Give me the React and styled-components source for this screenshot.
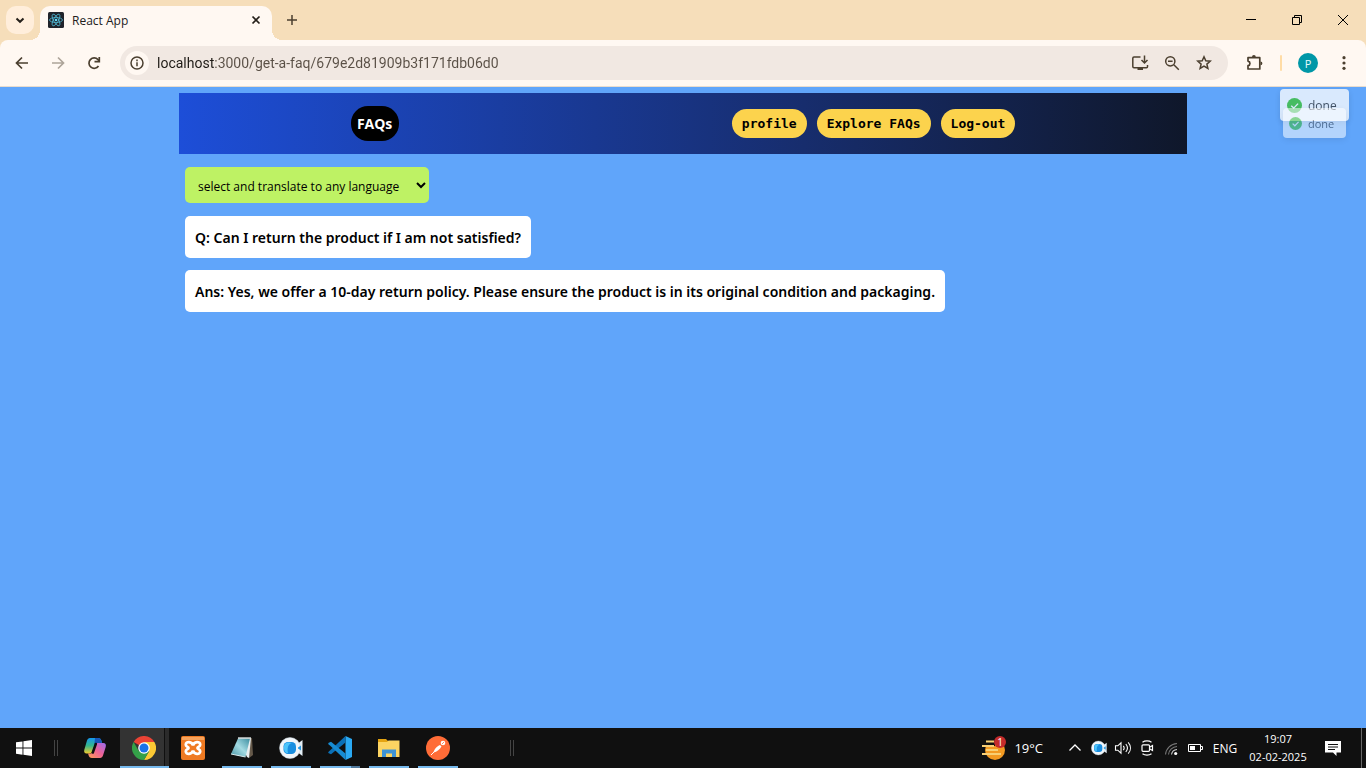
import React from "react";
import styled, { createGlobalStyle, css } from "styled-components";

const GlobalStyle = createGlobalStyle`
  *, *::before, *::after { box-sizing: border-box; }
  body { margin: 0; font-family: "Open Sans", "Noto Sans", sans-serif; }
  button { font: inherit; color: inherit; border: 0; padding: 0; background: none; }
  svg { display: block; flex: none; }
`;

const ui = `"Open Sans", "Noto Sans", sans-serif`;

const Screen = styled.div`
  display: flex;
  flex-direction: column;
  min-height: 100vh;
`;

/* ---------- browser chrome ---------- */

const TabStrip = styled.div`
  display: flex;
  height: 40px;
  background: #f6deba;
`;

const TabSearch = styled.button`
  display: grid;
  place-items: center;
  width: 28px;
  height: 28px;
  margin: 6px;
  border-radius: 10px;
  background: #ffeedb;
`;

const Tab = styled.div`
  position: relative;
  display: flex;
  align-items: center;
  gap: 8px;
  width: 232px;
  height: 34px;
  margin-top: 6px;
  padding: 0 8px 6px;
  border-radius: 10px 10px 0 0;
  background: #fff8f2;
  font: 12px ${ui};
  color: #22201c;

  &::before,
  &::after {
    content: "";
    position: absolute;
    bottom: 0;
    width: 10px;
    height: 10px;
  }
  &::before {
    right: 100%;
    background: radial-gradient(circle at 0 0, transparent 10px, #fff8f2 10px);
  }
  &::after {
    left: 100%;
    background: radial-gradient(circle at 100% 0, transparent 10px, #fff8f2 10px);
  }
`;

const TabTitle = styled.span`
  flex: 1;
`;

const TabButton = styled.button`
  display: grid;
  place-items: center;
  width: ${(p) => p.$size}px;
  height: ${(p) => p.$size}px;
`;

const NewTab = styled(TabButton)`
  margin: 6px;
`;

const WindowButtons = styled.div`
  display: flex;
  margin-left: auto;
`;

const WindowButton = styled.button`
  display: grid;
  place-items: center;
  width: 46px;
  height: 40px;
`;

const ToolbarBack = styled.div`
  background: #f6deba;
`;

const Toolbar = styled.div`
  display: flex;
  align-items: center;
  height: 47px;
  padding: 0 4px;
  border-bottom: 1px solid #e9dccd;
  border-radius: 8px 8px 0 0;
  background: #fff8f2;
`;

const ToolButton = styled.button`
  display: grid;
  place-items: center;
  width: 36px;
  height: 34px;
  opacity: ${(p) => (p.disabled ? 0.45 : 1)};
`;

const AddressBar = styled.div`
  display: flex;
  flex: 1;
  align-items: center;
  height: 34px;
  margin: 0 8px;
  padding: 0 8px 0 5px;
  border-radius: 17px;
  background: #f1e8e2;
`;

const SiteInfo = styled.button`
  display: grid;
  place-items: center;
  width: 24px;
  height: 24px;
  border-radius: 50%;
  background: #fff8f2;
`;

const Address = styled.input`
  flex: 1;
  min-width: 0;
  height: 24px;
  margin-left: 8px;
  padding: 0;
  border: 0;
  outline: 0;
  font: 14px Roboto, "Open Sans", sans-serif;
  color: transparent;
  background: linear-gradient(90deg, #1f1b16 57px, #5a5046 57px);
  background-clip: text;
`;

const AddressButton = styled(ToolButton)`
  width: 32px;
`;

const Separator = styled.span`
  width: 2px;
  height: 16px;
  margin: 0 8px;
  border-radius: 1px;
  background: #ffdca6;
`;

const Avatar = styled.span`
  display: grid;
  place-items: center;
  width: 20px;
  height: 20px;
  border-radius: 50%;
  background: #0097a7;
  color: #e9fbfd;
  font: 11px ${ui};
`;

/* ---------- page ---------- */

const Page = styled.div`
  position: relative;
  flex: 1;
  padding: 6px;
  background: #60a5fa;
`;

const Container = styled.div`
  max-width: 1008px;
  margin: 0 auto;
`;

const Nav = styled.nav`
  display: flex;
  align-items: center;
  justify-content: space-around;
  height: 61px;
  padding: 0 5px;
  background: linear-gradient(to right, #1d4ed8, #172d6d 62%, #0f172a);
`;

const Brand = styled.a`
  display: grid;
  place-items: center;
  width: 48px;
  height: 35px;
  border-radius: 17px;
  background: #000;
  color: #fff;
  font: 700 14px ${ui};
  text-decoration: none;
`;

const Links = styled.div`
  display: flex;
  gap: 10px;
`;

const pill = css`
  height: 29px;
  padding: 0 10px;
  border-radius: 15px;
  background: #fcd34d;
  color: #000;
  font: bold 13px/29px "DejaVu Sans Mono", "Liberation Mono", monospace;
  text-decoration: none;
  white-space: nowrap;
`;

const NavLink = styled.a`
  ${pill}
`;

const NavButton = styled.button`
  ${pill}
`;

const Faq = styled.main`
  display: flex;
  flex-direction: column;
  align-items: flex-start;
  gap: 12px;
  padding: 13px 6px;
`;

const Language = styled.select`
  width: 244px;
  height: 36px;
  margin-bottom: 1px;
  padding: 2px 9px 0;
  border: 0;
  border-radius: 5px;
  background: #bef264;
  color: #000;
  font: 12px ${ui};
`;

const Card = styled.p`
  margin: 0;
  padding: 12px 10px 10px;
  border-radius: 5px;
  background: #fff;
  color: #000;
  font: 600 14px/20px "Noto Sans", "Open Sans", sans-serif;
`;

const Toast = styled.div`
  position: absolute;
  display: flex;
  align-items: center;
  gap: 6px;
  top: ${(p) => (p.$back ? 21 : 2)}px;
  right: ${(p) => (p.$back ? 20 : 17)}px;
  width: ${(p) => (p.$back ? 63 : 69)}px;
  height: ${(p) => (p.$back ? 30 : 32)}px;
  padding-left: ${(p) => (p.$back ? 6 : 7)}px;
  border-radius: 4px;
  background: #fff;
  box-shadow: 0 2px 6px rgba(0, 0, 0, 0.15);
  opacity: ${(p) => (p.$back ? 0.52 : 0.76)};
  color: #363636;
  font: ${(p) => (p.$back ? 11 : 12)}px ${ui};
`;

/* ---------- taskbar ---------- */

const Taskbar = styled.footer`
  display: flex;
  align-items: center;
  height: 40px;
  background: #101010;
  color: #fff;
  font: 12px ${ui};
`;

const StartButton = styled.button`
  display: grid;
  place-items: center;
  width: 48px;
  height: 40px;
`;

const Grip = styled.span`
  width: 4px;
  height: 16px;
  margin: 0 ${(p) => p.$after}px 0 ${(p) => p.$before}px;
  border: solid #444;
  border-width: 0 1px;
`;

const Apps = styled.div`
  display: flex;
`;

const AppButton = styled.button`
  position: relative;
  display: grid;
  place-items: center;
  width: 49px;
  height: 40px;
  padding-right: 1px;
  background: ${(p) => (p.$active ? "linear-gradient(90deg, #333 44px, #101010 44px, #101010 45px, #2b2b2b 45px)" : "none")};

  &::after {
    content: "";
    position: absolute;
    bottom: 0;
    left: ${(p) => (p.$active ? 0 : 4)}px;
    right: ${(p) => (p.$active ? 0 : 5)}px;
    height: 2px;
    background: ${(p) =>
      p.$stacked ? "linear-gradient(90deg, #76b9ed 31px, #50789b 31px)" : p.$open || p.$active ? "#76b9ed" : "none"};
  }
`;

const Tray = styled.div`
  display: flex;
  align-items: center;
  height: 40px;
  margin-left: auto;
`;

const Weather = styled.button`
  display: flex;
  align-items: center;
  gap: 8px;
  margin-right: 20px;
  font-size: 13px;
`;

const TrayButton = styled.button`
  display: grid;
  place-items: center;
  width: 24px;
  height: 40px;
`;

const InputLanguage = styled.button`
  width: 36px;
  height: 40px;
`;

const Clock = styled.button`
  width: 70px;
  height: 40px;
  font-size: 11px;
  line-height: 18px;
`;

const Notifications = styled(TrayButton)`
  width: 40px;
  margin-right: 8px;
`;

const ShowDesktop = styled.button`
  width: 5px;
  height: 40px;
  border-left: 1px solid #666;
`;

/* ---------- icons ---------- */

const Icon = ({ size = 16, box = 16, children, color = "#4b3f2f", w = 1.7, ...rest }) => (
  <svg width={size} height={size} viewBox={`0 0 ${box} ${box}`} fill="none" stroke={color} strokeWidth={w} aria-hidden="true" {...rest}>
    {children}
  </svg>
);

const ReactLogo = () => (
  <Icon w={0.8} color="#4fb8d3">
    <rect width="16" height="16" rx="1.5" fill="#20232a" stroke="none" />
    <ellipse cx="8" cy="8" rx="6.5" ry="2.5" />
    <ellipse cx="8" cy="8" rx="6.5" ry="2.5" transform="rotate(60 8 8)" />
    <ellipse cx="8" cy="8" rx="6.5" ry="2.5" transform="rotate(120 8 8)" />
    <circle cx="8" cy="8" r="1.3" fill="#61dafb" stroke="none" />
  </Icon>
);

const Check = ({ size }) => (
  <Icon size={size} color="#fff" w={1.5}>
    <circle cx="8" cy="8" r="8" fill="#3fc433" stroke="none" />
    <path d="M4.5 8.2 7.2 10.8 11.8 6" />
  </Icon>
);

const VideoApp = ({ size }) => (
  <Icon size={size} box={24}>
    <path d="M17 9 23.500 4v16L17 15z" fill="#e4eff7" stroke="none" />
    <circle cx="11" cy="12" r="10.5" fill="#f1f6fa" stroke="#c9d5dd" strokeWidth=".5" />
    <rect x="4.500" y="6" width="12.500" height="12" rx="4.500" fill="#198ee0" stroke="none" />
    <path d="M5 11c0-5 5-5 8-4-4 1-5 5-4 10-3 0-4-2-4-6z" fill="#4cc4fa" stroke="none" />
    <path d="M19 11.5 22 9.5v5l-3-2z" fill="#2998df" stroke="none" />
  </Icon>
);

const Copilot = () => (
  <Icon size={24} box={24}>
    <defs>
      <linearGradient id="cpA" x1="0" y1="0" x2="0" y2="1">
        <stop stopColor="#1597ee" />
        <stop offset=".5" stopColor="#36b78b" />
        <stop offset="1" stopColor="#f3cb2c" />
      </linearGradient>
      <linearGradient id="cpB" x1="1" y1="0" x2="0" y2="1">
        <stop stopColor="#9a6cf2" />
        <stop offset=".5" stopColor="#ee6295" />
        <stop offset="1" stopColor="#ffa052" />
      </linearGradient>
    </defs>
    <path d="M7 2h8c2 0 3 1 3.500 3l.5 2h-5c-1 0-2 .7-2.400 2L9.500 15c-.5 1.600-1.300 2.500-3 2.500H3.800C1.500 17.500.7 16 1.300 13.700L4 4.500C4.500 3 5.500 2 7 2z" fill="url(#cpA)" stroke="none" />
    <path d="M12 2h3c2 0 3 1 3.500 3l.5 2h-5c-1.500 0-2.200.7-2.700 2z" fill="#1656b9" stroke="none" />
    <path d="M17 22H9c-2 0-3-1-3.500-3L5 17.500h2.500c1.500 0 2.500-1 3-2.500L12.500 9c.5-1.500 1.500-2 3-2h4.700c2.200 0 3.200 1.600 2.500 4L20 19.500c-.5 1.600-1.500 2.500-3 2.500z" fill="url(#cpB)" stroke="none" />
    <path d="M12.800 8 9.800 16.500" stroke="#101010" strokeWidth="2.500" strokeLinecap="round" />
  </Icon>
);

const Chrome = () => (
  <Icon size={24} box={24}>
    <path d="M12 12 1.600 6A12 12 0 0 1 22.400 6H12z" fill="#ea4335" stroke="none" />
    <path d="M12 6h10.400A12 12 0 0 1 12 24l5.200-9z" fill="#fcc934" stroke="none" />
    <path d="M1.600 6A12 12 0 0 0 12 24l5.200-9L12 12 6.800 15z" fill="#34a048" stroke="none" />
    <circle cx="12" cy="12" r="5.800" fill="#fff" stroke="none" />
    <circle cx="12" cy="12" r="4.500" fill="#1a73e8" stroke="none" />
  </Icon>
);

const Xampp = () => (
  <Icon size={24} box={24} color="#fff" w={2.800}>
    <rect width="24" height="24" rx="2" fill="#ef7a22" stroke="none" />
    <path d="M1 1h22v3H1z" fill="#f7a35c" stroke="none" />
    <path d="M12 9.500C11 5.500 4.800 5 4.800 8.700 4.800 10.600 7.500 11 7.500 12S4.800 13.400 4.800 15.300C4.800 19 11 18.500 12 14.500 13 18.500 19.200 19 19.200 15.300 19.200 13.400 16.500 13 16.500 12S19.200 10.600 19.200 8.700C19.200 5 13 5.500 12 9.500z" />
  </Icon>
);

const Notepad = () => (
  <Icon size={24} box={24}>
    <defs>
      <linearGradient id="np" x1="1" y1="0" x2="0" y2="1">
        <stop stopColor="#3b8da0" />
        <stop offset=".5" stopColor="#a3dae2" />
        <stop offset="1" stopColor="#4794a5" />
      </linearGradient>
    </defs>
    <path d="M8 2h14l1 17-4 3z" fill="#65594a" stroke="none" />
    <path d="M8 2h13l-2 20-2-1z" fill="#e9eef0" stroke="none" />
    <path d="M8 2.500h12L15.500 21 1 18z" fill="url(#np)" stroke="none" />
    <path d="M8 2h13" stroke="#ccd4d5" strokeWidth="1.500" />
    <path d="M1 18l14.500 3" stroke="#d9ecef" strokeWidth="1" />
  </Icon>
);

const VsCode = () => (
  <Icon size={24} box={24}>
    <path d="M17.500 0 24 3v18l-6.500 3z" fill="#2aa9f3" stroke="none" />
    <path d="M17.500 0v6.500L3 18.200.8 17.200a1 1 0 0 1-.2-1.500z" fill="#0b70b7" stroke="none" />
    <path d="M17.500 24v-6.500L3 5.800.8 6.800a1 1 0 0 0-.2 1.500z" fill="#178bd2" stroke="none" />
  </Icon>
);

const Explorer = () => (
  <Icon size={24} box={24}>
    <path d="M1 3h8l2 2h11v16H1z" fill="#e5a411" stroke="none" />
    <path d="M1 6h9l1.500-1.500H22.500V21H1z" fill="#fcd462" stroke="none" />
    <path d="M5 13.500h14V21h-4v-3.500H9V21H5z" fill="#3e93d5" stroke="none" />
  </Icon>
);

const Postman = () => (
  <Icon size={24} box={24} color="#fff">
    <circle cx="12" cy="12" r="12" fill="#ff6c37" stroke="none" />
    <path d="M5 19 10 14" strokeWidth="1" />
    <path d="M7.500 16.500c.500-3 3.500-6.500 6.500-7.500l1.500 1.500c-1.500 2.800-4.500 5.500-8 6z" fill="#fff" stroke="none" />
    <circle cx="17" cy="7" r="2.300" fill="#fff" stroke="none" />
    <path d="m16 8 2-2" stroke="#ff6c37" strokeWidth=".8" />
  </Icon>
);

const WeatherIcon = () => (
  <Icon size={26} box={26}>
    <circle cx="15" cy="15" r="10" fill="#f39a22" stroke="none" />
    <path d="M4 4h11v7H4z" fill="#101010" stroke="none" />
    <path d="M6 6.500h8M2 11h12M6 15h12M2 19h19" stroke="#f8cf74" strokeWidth="2" />
    <circle cx="20" cy="7" r="6" fill="#c42b2b" stroke="none" />
    <text x="20" y="10.500" fontSize="10" textAnchor="middle" fill="#fff" stroke="none" fontFamily="Open Sans, sans-serif">1</text>
  </Icon>
);

export default function App() {
  return (
    <Screen>
      <GlobalStyle />

      <TabStrip>
        <TabSearch aria-label="Search tabs">
          <Icon color="#241f19" w={2}><path d="m4.500 6.500 3.500 3.300 3.500-3.300" /></Icon>
        </TabSearch>
        <Tab>
          <ReactLogo />
          <TabTitle>React App</TabTitle>
          <TabButton $size={16} aria-label="Close tab">
            <Icon color="#241f19" w={1.700}><path d="m4.500 4.500 7 7m0-7-7 7" /></Icon>
          </TabButton>
        </Tab>
        <NewTab $size={28} aria-label="New tab">
          <Icon w={1.500}><path d="M8 3v10M3 8h10" /></Icon>
        </NewTab>
        <WindowButtons>
          <WindowButton aria-label="Minimize">
            <Icon size={10} box={10} color="#000" w={1}><path d="M0 4.500h10" /></Icon>
          </WindowButton>
          <WindowButton aria-label="Restore">
            <Icon size={10} box={10} color="#000" w={1}><path d="M.5 2.500h7v7h-7zM2.500 2.500v-2h7v7h-2" /></Icon>
          </WindowButton>
          <WindowButton aria-label="Close window">
            <Icon size={10} box={10} color="#000" w={1}><path d="m0 0 10 10M10 0 0 10" /></Icon>
          </WindowButton>
        </WindowButtons>
      </TabStrip>

      <ToolbarBack>
        <Toolbar>
          <ToolButton aria-label="Back">
            <Icon><path d="M14 8H3M8 2.500 2.500 8 8 13.500" /></Icon>
          </ToolButton>
          <ToolButton aria-label="Forward" disabled>
            <Icon><path d="M2 8h11M8 2.500 13.500 8 8 13.500" /></Icon>
          </ToolButton>
          <ToolButton aria-label="Reload">
            <Icon>
              <path d="M12.500 11A5.200 5.200 0 1 1 12 4.600L13 6" />
              <path d="M13.300 2v4.700H8.500" />
            </Icon>
          </ToolButton>

          <AddressBar>
            <SiteInfo aria-label="View site information">
              <Icon w={1.500}>
                <circle cx="8" cy="8" r="6" />
                <path d="M8 7.200v4M8 4.500v1.700" />
              </Icon>
            </SiteInfo>
            <Address aria-label="Address" defaultValue="localhost:3000/get-a-faq/679e2d81909b3f171fdb06d0" />
            <AddressButton aria-label="Install app">
              <Icon size={18} box={18} w={1.500}>
                <path d="M9.500 3H3a1.200 1.200 0 0 0-1.200 1.200v8.300A1.200 1.200 0 0 0 3 13.700h12.500a1 1 0 0 0 1-1V11" />
                <path d="M13.500 1.500v7M10.500 6l3 3 3-3" />
                <path d="M6.500 15h5.500" strokeWidth="2" />
              </Icon>
            </AddressButton>
            <AddressButton aria-label="Zoom">
              <Icon w={1.500}>
                <circle cx="6.300" cy="6.300" r="4.600" />
                <path d="m9.800 9.800 5 5M4 6.300h4.600" />
              </Icon>
            </AddressButton>
            <AddressButton aria-label="Bookmark this tab">
              <Icon w={1.500}>
                <path d="m8 1.800 1.800 4 4.400.4-3.300 2.900 1 4.400L8 11.200l-3.900 2.300 1-4.400L1.800 6.200l4.400-.4z" />
              </Icon>
            </AddressButton>
          </AddressBar>

          <ToolButton aria-label="Extensions">
            <Icon size={18} box={18} w={1.700}>
              <path d="M3 3.700h11.800v11.300H3v-3.300c2.600-.6 2.600-4 0-4.600z" strokeLinejoin="round" />
              <path d="M7 3a1.900 1.900 0 0 1 3.800 0zM15.500 7.400a1.900 1.900 0 0 1 0 3.800z" fill="#4b3f2f" stroke="none" />
            </Icon>
          </ToolButton>
          <Separator />
          <ToolButton aria-label="Profile">
            <Avatar>P</Avatar>
          </ToolButton>
          <ToolButton aria-label="Menu">
            <Icon stroke="none" fill="#4b3f2f">
              <circle cx="8" cy="2.700" r="1.600" />
              <circle cx="8" cy="8" r="1.600" />
              <circle cx="8" cy="13.300" r="1.600" />
            </Icon>
          </ToolButton>
        </Toolbar>
      </ToolbarBack>

      <Page>
        <Container>
          <Nav>
            <Brand href="#">FAQs</Brand>
            <Links>
              <NavLink href="#profile">profile</NavLink>
              <NavLink href="#faqs">Explore FAQs</NavLink>
              <NavButton type="button">Log-out</NavButton>
            </Links>
          </Nav>
          <Faq>
            <Language aria-label="Language">
              <option>select and translate to any language</option>
            </Language>
            <Card>Q: Can I return the product if I am not satisfied?</Card>
            <Card>
              Ans: Yes, we offer a 10-day return policy. Please ensure the product is in its original condition and packaging.
            </Card>
          </Faq>
        </Container>
        <Toast role="status"><Check size={15} />done</Toast>
        <Toast role="status" $back><Check size={13} />done</Toast>
      </Page>

      <Taskbar>
        <StartButton aria-label="Start">
          <Icon stroke="none" fill="#fff">
            <path d="M0 2.300 6.500 1.400V7.600H0zM7.400 1.200 16 0V7.600H7.400zM0 8.500h6.500v6.200L0 13.800zM7.400 8.500H16V16l-8.600-1.200z" />
          </Icon>
        </StartButton>
        <Grip $before={6} $after={13} />
        <Apps>
          <AppButton aria-label="Copilot"><Copilot /></AppButton>
          <AppButton aria-label="Chrome" $active><Chrome /></AppButton>
          <AppButton aria-label="XAMPP"><Xampp /></AppButton>
          <AppButton aria-label="Notepad" $open><Notepad /></AppButton>
          <AppButton aria-label="Video call" $open><VideoApp size={24} /></AppButton>
          <AppButton aria-label="Code editor" $open $stacked><VsCode /></AppButton>
          <AppButton aria-label="File explorer" $open><Explorer /></AppButton>
          <AppButton aria-label="Postman" $open><Postman /></AppButton>
        </Apps>
        <Grip $before={47} $after={0} />

        <Tray>
          <Weather>
            <WeatherIcon />
            19°C
          </Weather>
          <TrayButton aria-label="Show hidden icons">
            <Icon color="#fff" w={1.300}><path d="m2.500 10.500 5.500-5.500 5.500 5.500" /></Icon>
          </TrayButton>
          <TrayButton aria-label="Video call status"><VideoApp size={16} /></TrayButton>
          <TrayButton aria-label="Volume">
            <Icon size={18} box={18} color="#fff" w={1.100}>
              <path d="M1.500 6.800h2.300L7 3.800v10.400l-3.200-3H1.500z" />
              <path d="M9.300 6.800c1 1.300 1 3.100 0 4.400M11.800 5c2 2.400 2 5.600 0 8M14.200 3.300c3 3.400 3 8 0 11.400" />
            </Icon>
          </TrayButton>
          <TrayButton aria-label="Meet now">
            <Icon color="#fff" w={1.200}>
              <rect x="3" y="4.800" width="7.500" height="6.500" rx="1" />
              <path d="m10.500 7.300 3-1.800v5l-3-1.800M3.500 2.300c2.500-1.800 6.500-1.800 9 0M3.500 13.700c2.500 1.800 6.500 1.800 9 0" />
            </Icon>
          </TrayButton>
          <TrayButton aria-label="Network">
            <Icon color="#777" w={1.100}>
              <path d="M2.500 14.500A12 12 0 0 1 14 3.500M5.500 14.500A9 9 0 0 1 14 6.500" />
              <path d="M8.500 14.500A6 6 0 0 1 14 9.500" stroke="#ccc" />
              <circle cx="12.700" cy="13.500" r="1.600" fill="#fff" stroke="none" />
            </Icon>
          </TrayButton>
          <TrayButton aria-label="Battery">
            <Icon color="#fff" w={1}>
              <path d="M1.500 4.500h12v7h-12zM14 6.500h1.500v3H14" />
              <path d="M3 6h5v4H3z" fill="#fff" stroke="none" />
            </Icon>
          </TrayButton>
          <InputLanguage>ENG</InputLanguage>
          <Clock>
            19:07
            <br />
            02-02-2025
          </Clock>
          <Notifications aria-label="Notifications">
            <Icon stroke="none">
              <path d="M0 1h16v11.500h-4.500V16L8 12.500H0z" fill="#fff" />
              <path d="M3 4.500h10M3 7h10M3 9.500h7" stroke="#101010" strokeWidth="1" />
            </Icon>
          </Notifications>
          <ShowDesktop aria-label="Show desktop" />
        </Tray>
      </Taskbar>
    </Screen>
  );
}
